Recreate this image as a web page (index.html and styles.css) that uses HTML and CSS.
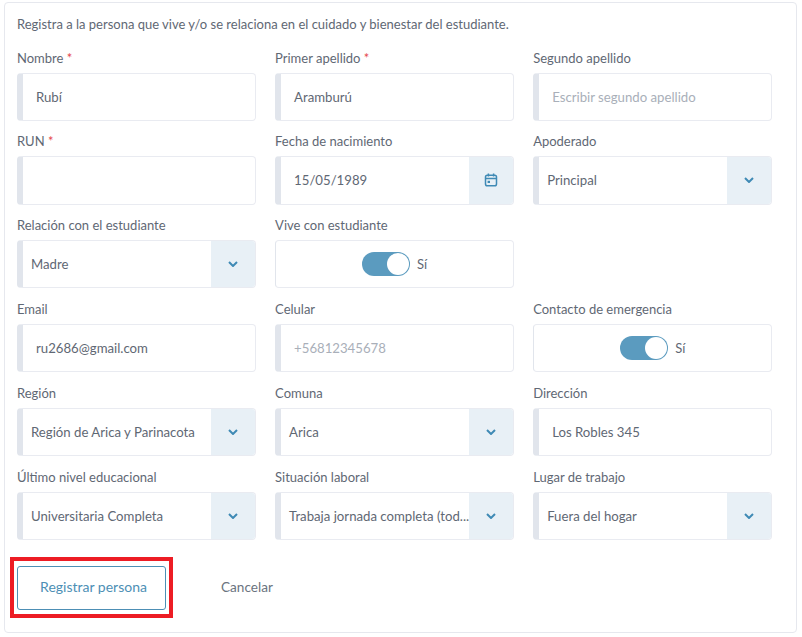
FILE: index.html
```html
<!DOCTYPE html>
<html lang="es">
<head>
  <meta charset="UTF-8" />
  <meta name="viewport" content="width=device-width, initial-scale=1.0"/>
  <title>Registrar persona</title>
  <link rel="stylesheet" href="styles.css">
</head>
<body>
  <div class="card">
    <p class="intro">Registra a la persona que vive y/o se relaciona en el cuidado y bienestar del estudiante.</p>

    <div class="form-grid">
      <div class="field">
        <label>Nombre <span class="req">*</span></label>
        <div class="box"><div class="value">Rubí</div></div>
      </div>
      <div class="field">
        <label>Primer apellido <span class="req">*</span></label>
        <div class="box"><div class="value">Aramburú</div></div>
      </div>
      <div class="field">
        <label>Segundo apellido</label>
        <div class="box"><div class="value muted">Escribir segundo apellido</div></div>
      </div>

      <div class="field">
        <label>RUN <span class="req">*</span></label>
        <div class="box"><div class="value"></div></div>
      </div>
      <div class="field">
        <label>Fecha de nacimiento</label>
        <div class="box">
          <div class="value">15/05/1989</div>
          <div class="addon">
            <svg width="14" height="14" viewBox="0 0 14 14" fill="none" stroke="#3f8ab5" stroke-width="1.5">
              <rect x="1.5" y="2.2" width="11" height="10.6" rx="1.8"/>
              <path d="M1.5 5.6h11M4.4 .4v3.2M9.6 .4v3.2"/>
              <rect x="3.6" y="7.8" width="2.4" height="2.2" fill="#3f8ab5" stroke="none"/>
            </svg>
          </div>
        </div>
      </div>
      <div class="field">
        <label>Apoderado</label>
        <div class="box select">
          <div class="value">Principal</div>
          <div class="addon"><svg class="chev" width="10" height="6" viewBox="0 0 10 6"><path d="M1 1l4 4 4-4"/></svg></div>
        </div>
      </div>

      <div class="field">
        <label>Relación con el estudiante</label>
        <div class="box select">
          <div class="value">Madre</div>
          <div class="addon"><svg class="chev" width="10" height="6" viewBox="0 0 10 6"><path d="M1 1l4 4 4-4"/></svg></div>
        </div>
      </div>
      <div class="field">
        <label>Vive con estudiante</label>
        <div class="box toggle-box">
          <span class="switch"><span class="knob"></span></span>
          <span class="yes">Sí</span>
        </div>
      </div>
      <div class="field"></div>

      <div class="field">
        <label>Email</label>
        <div class="box"><div class="value">ru2686@gmail.com</div></div>
      </div>
      <div class="field">
        <label>Celular</label>
        <div class="box"><div class="value muted">+56812345678</div></div>
      </div>
      <div class="field">
        <label>Contacto de emergencia</label>
        <div class="box toggle-box">
          <span class="switch"><span class="knob"></span></span>
          <span class="yes">Sí</span>
        </div>
      </div>

      <div class="field">
        <label>Región</label>
        <div class="box select">
          <div class="value">Región de Arica y Parinacota</div>
          <div class="addon"><svg class="chev" width="10" height="6" viewBox="0 0 10 6"><path d="M1 1l4 4 4-4"/></svg></div>
        </div>
      </div>
      <div class="field">
        <label>Comuna</label>
        <div class="box select">
          <div class="value">Arica</div>
          <div class="addon"><svg class="chev" width="10" height="6" viewBox="0 0 10 6"><path d="M1 1l4 4 4-4"/></svg></div>
        </div>
      </div>
      <div class="field">
        <label>Dirección</label>
        <div class="box"><div class="value">Los Robles 345</div></div>
      </div>

      <div class="field">
        <label>Último nivel educacional</label>
        <div class="box select">
          <div class="value">Universitaria Completa</div>
          <div class="addon"><svg class="chev" width="10" height="6" viewBox="0 0 10 6"><path d="M1 1l4 4 4-4"/></svg></div>
        </div>
      </div>
      <div class="field">
        <label>Situación laboral</label>
        <div class="box select">
          <div class="value">Trabaja jornada completa (tod...</div>
          <div class="addon"><svg class="chev" width="10" height="6" viewBox="0 0 10 6"><path d="M1 1l4 4 4-4"/></svg></div>
        </div>
      </div>
      <div class="field">
        <label>Lugar de trabajo</label>
        <div class="box select">
          <div class="value">Fuera del hogar</div>
          <div class="addon"><svg class="chev" width="10" height="6" viewBox="0 0 10 6"><path d="M1 1l4 4 4-4"/></svg></div>
        </div>
      </div>
    </div>

    <div class="actions">
      <div class="highlight"><button class="btn-primary">Registrar persona</button></div>
      <button class="btn-link">Cancelar</button>
    </div>
  </div>
</body>
</html>
```

FILE: styles.css
```css
* {
  box-sizing: border-box;
}

body {
  margin: 0;
  padding: 2px 5px 0 4px;
  background: #fff;
  font-family: 'Lato', 'Open Sans', sans-serif;
  font-size: 13px;
  color: #5f6874;
}

.card {
  height: 631px;
  border: 1px solid #e6e8ee;
  border-radius: 4px;
  padding: 13px 23px 0 12px;
}

.intro {
  margin: 0 0 16.6px;
  line-height: 16px;
}

.form-grid {
  display: grid;
  grid-template-columns: repeat(3, 239.2px);
  column-gap: 18.9px;
  row-gap: 11.6px;
}

.field label {
  display: block;
  height: 24px;
  padding-top: 1px;
  line-height: 16px;
}

.req {
  color: #e5484d;
}

.box {
  display: flex;
  align-items: stretch;
  height: 48.2px;
  border: 1px solid #e9ebf1;
  border-left: 6px solid #e1e5ec;
  border-radius: 4px;
  overflow: hidden;
  background: #fff;
}

.value {
  flex: 1;
  min-width: 0;
  display: flex;
  align-items: center;
  padding-left: 13px;
  font-size: 13.2px;
  white-space: nowrap;
  overflow: hidden;
}

.select .value {
  padding-left: 8px;
}

.muted {
  color: #a9afb9;
}

.addon {
  flex: none;
  width: 44.6px;
  display: flex;
  align-items: center;
  justify-content: center;
  background: #e8f0f6;
}

.chev path {
  fill: none;
  stroke: #3f8ab5;
  stroke-width: 2;
}

.toggle-box {
  border-left-width: 1px;
  align-items: center;
  justify-content: center;
  gap: 7px;
}

.switch {
  width: 48px;
  height: 24px;
  padding: 1px;
  display: flex;
  justify-content: flex-end;
  border-radius: 12px;
  background: #5b9bbf;
}

.knob {
  width: 22px;
  height: 22px;
  border-radius: 50%;
  background: #fff;
}

.actions {
  display: flex;
  align-items: center;
  margin-top: 17.6px;
  margin-left: -7px;
}

.highlight {
  padding: 5px 3px 4px;
  border: 4px solid #ed1c24;
}

.btn-primary {
  display: block;
  width: 149px;
  height: 44px;
  padding: 0 0 3px 4px;
  border: 1px solid #4d8fb5;
  border-radius: 3px;
  background: #fff;
  color: #4d8fb5;
  font: inherit;
  font-size: 14px;
}

.btn-link {
  margin-left: 48px;
  padding: 0 0 2px;
  border: 0;
  background: none;
  color: #6b7480;
  font: inherit;
  font-size: 13.6px;
}
```
